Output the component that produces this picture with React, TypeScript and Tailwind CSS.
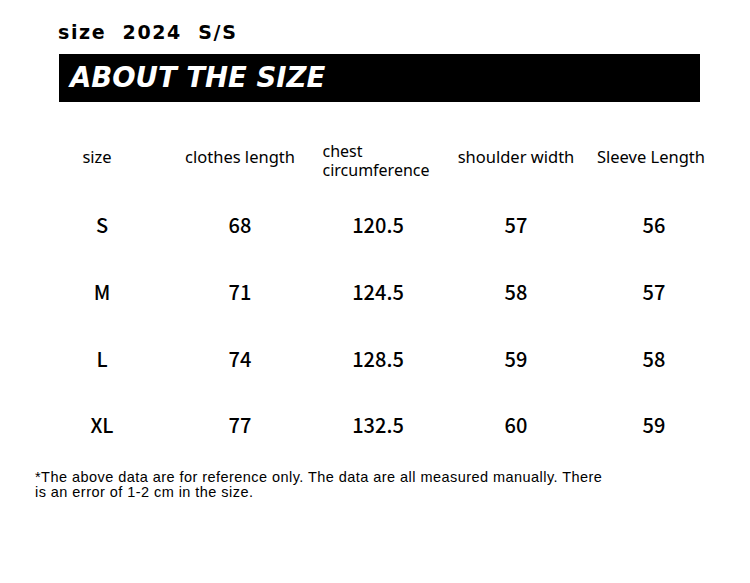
const headers = ["size", "clothes length", "chest circumference", "shoulder width", "Sleeve Length"];
const rows = [
  ["S", "68", "120.5", "57", "56"],
  ["M", "71", "124.5", "58", "57"],
  ["L", "74", "128.5", "59", "58"],
  ["XL", "77", "132.5", "60", "59"],
];

export default function App() {
  return (
    <div className="w-[750px] h-[583px] bg-white text-black overflow-hidden relative">
      <div className="pl-[58px] pt-[20px] h-[54px]">
        <div className="text-[19px] font-bold tracking-[1.6px] leading-[24px] [font-family:'DejaVu_Sans',sans-serif]">
          size&nbsp; 2024&nbsp; S/S
        </div>
      </div>
      <div className="ml-[59px] w-[641px] h-[48px] bg-black flex items-center pl-[11px]">
        <span className="text-white italic font-black text-[27.5px] leading-none [font-family:'DejaVu_Sans',sans-serif]">
          ABOUT THE SIZE
        </span>
      </div>

      <div className="ml-[33px] mt-[32px] w-[690px] [font-family:'Noto_Sans',sans-serif]">
        <div className="grid grid-cols-5 h-[52px] items-center text-[16.5px] leading-[18px]">
          {headers.map((h, i) => (
            <div key={i} className={`flex justify-center ${i === 2 ? "" : "-mt-[6px]"}`}>
              {i === 2 ? (
                <div className="flex flex-col text-left text-[16px] leading-[18px] -ml-[4px] gap-[1px]">
                  <span>chest</span>
                  <span>circumference</span>
                </div>
              ) : (
                <span className={i === 0 ? "-ml-[10px]" : i === 4 ? "-ml-[6px]" : ""}>{h}</span>
              )}
            </div>
          ))}
        </div>
        {rows.map((r, ri) => (
          <div key={ri} className={`grid grid-cols-5 h-[66.7px] items-center text-[20px] font-medium [font-family:'Noto_Sans_CJK_SC',sans-serif] ${ri === 0 ? "mt-[6px]" : ""}`}>
            {r.map((v, i) => (
              <div key={i} className="text-center">{v}</div>
            ))}
          </div>
        ))}
      </div>

      <p className="ml-[35px] mt-[11px] text-[14.5px] leading-[15px] tracking-[0.45px] [font-family:'Liberation_Sans',sans-serif]">
        *The above data are for reference only. The data are all measured manually. There<br />
        is an error of 1-2 cm in the size.
      </p>
    </div>
  );
}
